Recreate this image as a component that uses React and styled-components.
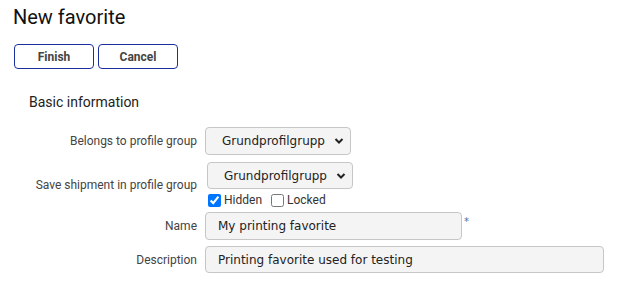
import React from 'react';
import styled, { createGlobalStyle } from 'styled-components';

const GlobalStyle = createGlobalStyle`
  body {
    margin: 0;
    background: #fff;
    font-family: Roboto, "Liberation Sans", sans-serif;
  }
`;

const Page = styled.div`
  padding: 6px 0 0 13px;
`;

const Title = styled.h1`
  margin: 0;
  font-size: 20px;
  font-weight: 400;
  line-height: 23px;
  color: #111;
`;

const Toolbar = styled.div`
  display: flex;
  gap: 4px;
  margin: 15px 0 0 1px;
`;

const Button = styled.button`
  width: 80px;
  height: 25px;
  padding: 0;
  background: #fff;
  border: 1.5px solid #1c2e9e;
  border-radius: 4px;
  font-family: Roboto, "Liberation Sans", sans-serif;
  font-size: 12px;
  font-weight: 700;
  color: #444;
`;

const Section = styled.h2`
  margin: 25px 0 0 16px;
  font-size: 14px;
  font-weight: 400;
  line-height: 17px;
  color: #222;
`;

const Form = styled.div`
  display: flex;
  flex-direction: column;
  margin-top: 16px;
`;

const Row = styled.div`
  display: flex;
  align-items: center;
  margin-top: ${p => p.$gap || 0}px;
`;

const Label = styled.div`
  width: 184px;
  padding-right: 8px;
  text-align: right;
  font-size: 12px;
  color: #444;
`;

const Stack = styled.div`
  display: flex;
  flex-direction: column;
  margin-left: ${p => p.$shift || 0}px;
`;

const SelectWrap = styled.div`
  position: relative;
  width: 146px;
  height: ${p => p.$height || 28}px;
`;

const Select = styled.select`
  appearance: none;
  width: 100%;
  height: 100%;
  padding: 0 0 0 16px;
  background: #f4f4f4;
  border: 1px solid #c6c6c6;
  border-radius: 4px;
  font-family: "DejaVu Sans", Verdana, sans-serif;
  font-size: 12px;
  color: #222;
  outline: none;
`;

const Chevron = styled.svg`
  position: absolute;
  right: 7px;
  top: calc(50% - 4px);
  width: 10px;
  height: 8px;
  pointer-events: none;
`;

const Checks = styled.div`
  display: flex;
  align-items: center;
  gap: 8px;
  margin-top: 4px;
  font-size: 12px;
  color: #333;
`;

const CheckLabel = styled.label`
  display: flex;
  align-items: center;
  gap: 3px;
`;

const Check = styled.input`
  margin: 0 0 0 1px;
  width: 13px;
  height: 13px;
  accent-color: #0075ff;
`;

const Input = styled.input`
  box-sizing: border-box;
  width: ${p => p.$width}px;
  height: ${p => p.$height || 28}px;
  padding: 0 12px;
  background: #f4f4f4;
  border: 1px solid #c6c6c6;
  border-radius: 4px;
  font-family: "DejaVu Sans", Verdana, sans-serif;
  font-size: 12px;
  color: #222;
  outline: none;
`;

const Required = styled.span`
  align-self: flex-start;
  margin: 4px 0 0 2px;
  font-family: "DejaVu Sans", Verdana, sans-serif;
  font-size: 10px;
  color: #4a6fa5;
`;

const ProfileSelect = ({ height }) => (
  <SelectWrap $height={height}>
    <Select defaultValue="g">
      <option value="g">Grundprofilgrupp</option>
    </Select>
    <Chevron viewBox="0 0 10 8">
      <path d="M1.5 2 L5 5.5 L8.5 2" fill="none" stroke="#222" strokeWidth="2" />
    </Chevron>
  </SelectWrap>
);

export default function App() {
  return (
    <Page>
      <GlobalStyle />
      <Title>New favorite</Title>
      <Toolbar>
        <Button>Finish</Button>
        <Button>Cancel</Button>
      </Toolbar>
      <Section>Basic information</Section>
      <Form>
        <Row>
          <Label>Belongs to profile group</Label>
          <ProfileSelect />
        </Row>
        <Row $gap={7}>
          <Label>Save shipment in profile group</Label>
          <Stack $shift={2}>
            <ProfileSelect height={27} />
            <Checks>
              <CheckLabel>
                <Check type="checkbox" defaultChecked />
                Hidden
              </CheckLabel>
              <CheckLabel>
                <Check type="checkbox" />
                Locked
              </CheckLabel>
            </Checks>
          </Stack>
        </Row>
        <Row $gap={5}>
          <Label>Name</Label>
          <Input $width={257} defaultValue="My printing favorite" />
          <Required>*</Required>
        </Row>
        <Row $gap={6}>
          <Label>Description</Label>
          <Input $width={399} $height={27} defaultValue="Printing favorite used for testing" />
        </Row>
      </Form>
    </Page>
  );
}
